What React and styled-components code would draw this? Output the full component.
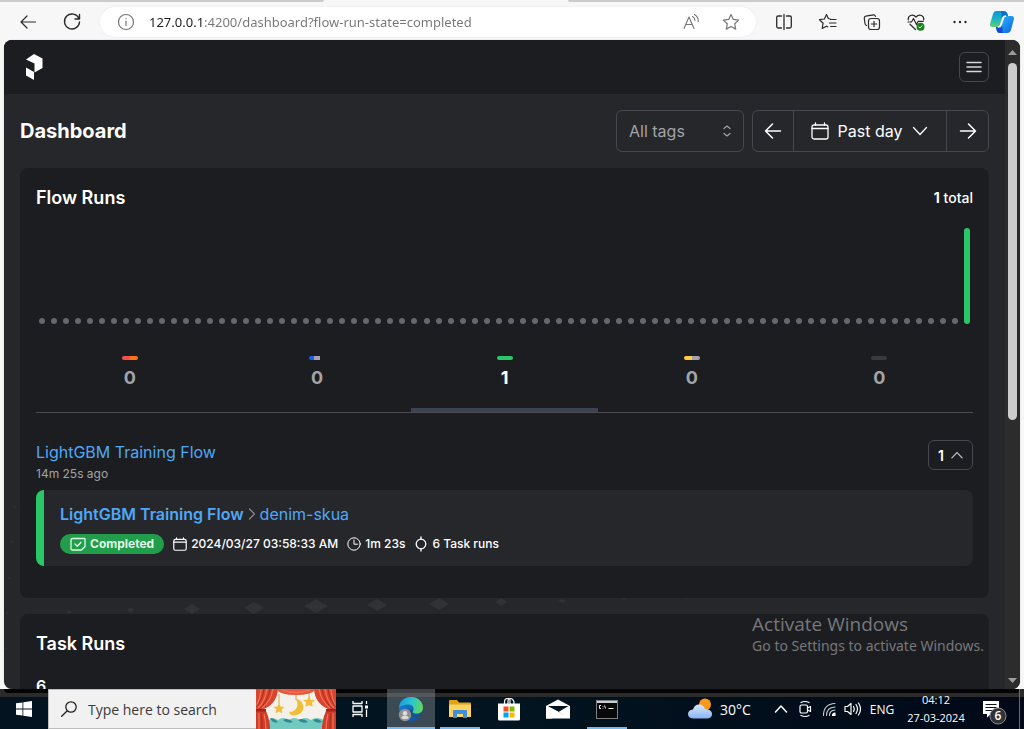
import React from "react";
import styled, { createGlobalStyle, css } from "styled-components";

const GlobalStyle = createGlobalStyle`
  *, *::before, *::after { box-sizing: border-box; }
  html, body, #root { height: 100%; }
  body { margin: 0; overflow: hidden; background: #f7f7f7; }
  button, input, select { font: inherit; color: inherit; margin: 0; }
  button { background: none; border: 0; padding: 0; cursor: pointer; }
  a { text-decoration: none; color: #4fa8f6; }
  h1, h2, p { margin: 0; }
  svg { display: block; flex: none; }
`;

const systemFont = css`font-family: "Open Sans", "Noto Sans", sans-serif;`;

const Screen = styled.div`
  height: 100vh;
  min-height: 400px;
  display: flex;
  flex-direction: column;
  overflow: hidden;
  position: relative;
  background: #f7f7f7;
`;

/* ---------- browser chrome ---------- */

const TabStrip = styled.div`
  flex: none;
  display: flex;
  gap: 244px;
  height: 3px;
`;
const TabEdge = styled.div`
  width: 324px;
  flex: ${(p) => (p.$grow ? 1 : "none")};
  height: 2px;
  background: #cbcbcb;
  border-radius: ${(p) => (p.$grow ? "0 0 0 2px" : "0 0 2px 0")};
`;
const Toolbar = styled.div`
  ${systemFont}
  flex: none;
  display: flex;
  align-items: center;
  height: 37px;
  padding: 0 2px 0 6px;
  color: #2b2b2b;
`;
const ToolButton = styled.button`
  width: ${(p) => (p.$narrow ? "40px" : "44px")};
  height: 32px;
  display: grid;
  place-items: center;
`;
const AddressBar = styled.form`
  flex: 1;
  min-width: 0;
  height: 30px;
  margin: 0 6px;
  display: flex;
  align-items: center;
  border-radius: 15px;
  background: #fff;
  box-shadow: 0 0 2px #e2e2e2;
  padding: 0 5px 0 17px;
  color: #767676;
`;
const Address = styled.input`
  flex: 1;
  min-width: 0;
  height: 24px;
  margin-left: 14px;
  padding: 0;
  border: 0;
  outline: 0;
  font-family: "Noto Sans", "Open Sans", sans-serif;
  font-size: 13px;
  color: #1d1d1d;
  background: linear-gradient(to right, #1d1d1d 54px, #757575 54px);
  -webkit-background-clip: text;
  background-clip: text;
  -webkit-text-fill-color: transparent;
`;
const AddressAction = styled.button`
  width: 40px;
  height: 28px;
  display: grid;
  place-items: center;
`;

/* ---------- page ---------- */

const Viewport = styled.div`
  flex: 1;
  min-height: 0;
  margin: 0 4px;
  display: flex;
  overflow: hidden;
  border-radius: 8px;
  background: #26272b;
  box-shadow: 0 0 1px #8a8a8a;
  font-family: Inter, sans-serif;
  color: #fff;
`;
const Page = styled.div`
  flex: 1;
  min-width: 0;
  overflow: hidden;
  position: relative;
`;
const NavBar = styled.header`
  height: 54px;
  padding: 0 16px 0 22px;
  display: flex;
  align-items: center;
  justify-content: space-between;
  background: #1c1d20;
`;
const MenuButton = styled.button`
  width: 30px;
  height: 30px;
  display: grid;
  place-items: center;
  border: 1px solid #46474f;
  border-radius: 6px;
  color: #d8d8dc;
`;
const Backdrop = styled.svg`
  position: absolute;
  left: 0;
  top: 0;
`;
const Main = styled.main`
  position: relative;
  display: flex;
  flex-direction: column;
  gap: 16px;
  padding: 16px;
`;
const PageHead = styled.div`
  display: flex;
  align-items: center;
  justify-content: space-between;
`;
const PageTitle = styled.h1`
  font-size: 20px;
  line-height: 28px;
  font-weight: 700;
`;
const Filters = styled.div`
  display: flex;
  gap: 8px;
  font-size: 16px;
`;
const SelectBox = styled.label`
  width: 128px;
  height: 42px;
  display: flex;
  align-items: center;
  padding: 0 10px 0 12px;
  border: 1px solid #46474f;
  border-radius: 6px;
  color: #a2a2a6;
`;
const TagSelect = styled.select`
  flex: 1;
  min-width: 0;
  appearance: none;
  border: 0;
  padding: 0;
  outline: 0;
  background: transparent;
`;
const ButtonGroup = styled.div`
  height: 42px;
  display: flex;
  border: 1px solid #46474f;
  border-radius: 6px;
`;
const GroupButton = styled.button`
  width: ${(p) => (p.$wide ? "154px" : "41px")};
  display: flex;
  align-items: center;
  justify-content: center;
  gap: 9px;
  border-right: ${(p) => (p.$wide ? "1px solid #46474f" : "0")};
  border-left: ${(p) => (p.$wide ? "1px solid #46474f" : "0")};
  &:first-child { width: 40px; }
`;

const Card = styled.section`
  padding: 16px 16px 32px;
  border-radius: 8px;
  background: #1c1d20;
`;
const CardHead = styled.div`
  display: flex;
  align-items: center;
  justify-content: space-between;
`;
const CardTitle = styled.h2`
  font-size: 18px;
  line-height: 28px;
  font-weight: 600;
`;
const Total = styled.p`
  font-size: 14px;
  line-height: 20px;
  font-weight: 500;
`;
const TotalCount = styled.span`
  font-weight: 700;
`;
const Chart = styled.div`
  display: flex;
  align-items: flex-end;
  height: 96px;
  margin-top: 16px;
`;
const Slot = styled.div`
  flex: 1;
  display: flex;
  justify-content: center;
  align-items: flex-end;
  height: 100%;
`;
const Bar = styled.div`
  width: 6px;
  height: ${(p) => (p.$filled ? "100%" : "6px")};
  border-radius: 3px;
  background: ${(p) => (p.$filled ? "#2ac769" : "#65666e")};
`;
const StateTabs = styled.div`
  display: flex;
  margin-top: 16px;
  border-bottom: 1px solid #4b4c52;
`;
const StateTab = styled.button`
  flex: 1;
  height: 72px;
  padding-top: 16px;
  display: flex;
  flex-direction: column;
  align-items: center;
  gap: 6px;
  font-size: 18px;
  line-height: 24px;
  font-weight: 700;
  color: ${(p) => (p.$active ? "#fff" : "#a4a4a8")};
  border-bottom: 4px solid ${(p) => (p.$active ? "#3b4252" : "transparent")};
`;
const Pill = styled.span`
  width: 16px;
  height: 4px;
  border-radius: 2px;
  background: ${(p) => p.$fill};
`;
const FlowHead = styled.div`
  margin-top: 27px;
  display: flex;
  align-items: flex-start;
  justify-content: space-between;
`;
const FlowLink = styled.a`
  display: block;
  font-size: 16px;
  line-height: 24px;
`;
const Age = styled.p`
  font-size: 12px;
  line-height: 20px;
  color: #a2a2a6;
`;
const CountButton = styled.button`
  width: 45px;
  height: 30px;
  display: flex;
  align-items: center;
  justify-content: center;
  gap: 7px;
  border: 1px solid #46474f;
  border-radius: 6px;
  font-size: 14px;
  font-weight: 600;
`;
const RunItem = styled.article`
  margin-top: 6px;
  padding: 12px 16px;
  border-left: 8px solid #2ac769;
  border-radius: 8px;
  background: #26272b;
`;
const Crumbs = styled.div`
  display: flex;
  align-items: center;
  gap: 4px;
  font-size: 16px;
  line-height: 24px;
`;
const FlowName = styled.a`
  font-weight: 600;
`;
const Details = styled.div`
  display: flex;
  align-items: center;
  gap: 9px;
  margin-top: 8px;
  font-size: 12px;
  line-height: 20px;
  font-weight: 500;
`;
const Badge = styled.span`
  display: flex;
  align-items: center;
  gap: 4px;
  padding: 0 10px;
  border-radius: 10px;
  background: #219d4b;
  color: #dffbe8;
  font-weight: 700;
`;
const Detail = styled.span`
  display: flex;
  align-items: center;
  gap: 4px;
`;
const TaskCount = styled.p`
  margin-top: 16px;
  font-size: 16px;
  line-height: 24px;
  font-weight: 600;
`;

const Scrollbar = styled.div`
  flex: none;
  width: 15px;
  display: flex;
  flex-direction: column;
  align-items: center;
  padding: 10px 0 6px;
  background: #2c2c2c;
`;
const Thumb = styled.div`
  width: 9px;
  height: 357px;
  margin: 8px 0 auto;
  border-radius: 5px;
  background: #cdcdcd;
`;

const Watermark = styled.aside`
  ${systemFont}
  position: absolute;
  right: 40px;
  bottom: 73px;
  color: #77787b;
  pointer-events: none;
`;
const WatermarkTitle = styled.p`
  font-size: 19px;
  line-height: 24px;
`;
const WatermarkText = styled.p`
  font-family: "Noto Sans", "Open Sans", sans-serif;
  font-size: 14px;
  line-height: 20px;
`;

/* ---------- taskbar ---------- */

const Taskbar = styled.footer`
  ${systemFont}
  position: relative;
  flex: none;
  height: 40px;
  display: flex;
  color: #fff;
  background: linear-gradient(to bottom, #2b2b2b 8px, transparent 8px),
    linear-gradient(to right, #03131f, #01141f 50%, #020817);
`;
const WindowShadow = styled.div`
  position: absolute;
  inset: 0 4px auto;
  height: 4px;
  border-radius: 0 0 6px 6px;
  background: #040404;
`;
const StartButton = styled.button`
  position: relative;
  width: 48px;
  display: grid;
  place-items: center;
`;
const SearchBox = styled.label`
  position: relative;
  width: 208px;
  display: flex;
  align-items: center;
  gap: 11px;
  padding-left: 12px;
  background: #f1f1f1;
  border: 1px solid #bdbdbd;
  border-width: 1px 0 1px 1px;
  color: #222;
`;
const SearchInput = styled.input`
  flex: 1;
  min-width: 0;
  border: 0;
  padding: 0;
  outline: 0;
  background: transparent;
  font-size: 14px;
  &::placeholder { color: #3a3a3a; opacity: 1; }
`;
const Curtain = styled.svg`
  position: relative;
`;
const AppButton = styled.button`
  position: relative;
  width: 48px;
  margin-left: ${(p) => (p.$first ? "3px" : "1px")};
  display: grid;
  place-items: center;
  background: ${(p) => (p.$active ? "rgba(140, 150, 155, 0.42)" : "none")};
  &::after {
    content: "";
    position: absolute;
    bottom: 0;
    left: ${(p) => (p.$active ? "0" : "4px")};
    right: ${(p) => (p.$active ? "0" : "4px")};
    height: 2px;
    background: ${(p) => (p.$open ? "#76b9ed" : "transparent")};
  }
`;
const TaskView = styled(StartButton)``;
const Tray = styled.div`
  position: relative;
  display: flex;
  align-items: stretch;
  margin-left: auto;
`;
const Weather = styled.button`
  width: 81px;
  display: flex;
  align-items: center;
  gap: 8px;
  font-size: 14px;
`;
const TrayButton = styled.button`
  width: ${(p) => p.$width || 24}px;
  display: grid;
  place-items: center;
  font-size: 12px;
`;
const Clock = styled.button`
  width: 74px;
  display: flex;
  flex-direction: column;
  align-items: center;
  justify-content: center;
  font-size: 11px;
  line-height: 18px;
  white-space: nowrap;
`;
const ShowDesktop = styled.button`
  width: 5px;
  margin-left: 6px;
  border-left: 1px solid #67676c;
`;

/* ---------- icons ---------- */

const Icon = ({ w = 20, h = w, box, sw = 1.2, children, ...rest }) => (
  <svg width={w} height={h} viewBox={box || `0 0 ${w} ${h}`} fill="none" stroke="currentColor"
    strokeWidth={sw} strokeLinecap="round" strokeLinejoin="round" aria-hidden="true" {...rest}>
    {children}
  </svg>
);

const BackIcon = () => <Icon><path d="M17.500 10H3M9 4 3 10l6 6" /></Icon>;
const ReloadIcon = () => (
  <Icon sw={1.4}><path d="M16.900 6.500A7.500 7.500 0 1 0 17.500 10M17.500 2.500v4.500H13" /></Icon>
);
const InfoIcon = () => (
  <Icon w={18} sw={1.2}><circle cx="9" cy="9" r="7.500" /><path d="M9 8v4.500M9 5.500v.2" /></Icon>
);
const ReadIcon = () => (
  <Icon w={20} sw={1.1}>
    <path d="M3 16.500 8 5l5 11.500M4.800 12.500h6.400M11.500 4.500q2.500 1.500 2.500 4M13.500 2.500q4 2.500 3.800 7" />
  </Icon>
);
const StarIcon = () => (
  <Icon w={20} sw={1.2}>
    <path d="m10 2.500 2.300 4.900 5.300.7-3.900 3.700 1 5.300-4.700-2.600-4.700 2.600 1-5.300-3.900-3.700 5.300-.7z" />
  </Icon>
);
const SplitIcon = () => (
  <Icon w={20} sw={1.3}>
    <path d="M7.500 4H4.200Q2.700 4 2.700 5.500v9Q2.700 16 4.200 16h3.300M12.500 4h3.300q1.500 0 1.500 1.500v9q0 1.500-1.500 1.500h-3.300M10 2.500v15" />
  </Icon>
);
const FavoritesIcon = () => (
  <Icon w={20} sw={1.2}>
    <path d="M12 6.800 10.300 6.500 8.500 2.500 6.400 7l-4.900.7 3.600 3.500-.9 5.300 4.300-2.300 1.200.6M12.500 7.500H18M11.500 11H18M12.500 14.500H18" />
  </Icon>
);
const CollectionsIcon = () => (
  <Icon w={20} sw={1.2}>
    <rect x="6.500" y="6.500" width="11" height="11" rx="2.500" />
    <path d="M12 9.300v5.400M9.300 12h5.400M4.500 13.500Q3.200 13 3 11.500L2.300 6.300Q2.100 4.500 3.800 4.200l7.500-1.400Q13 2.600 13.500 4.300" />
  </Icon>
);
const HealthIcon = () => (
  <Icon w={20} sw={1.2}>
    <path d="M2.300 8C1.500 4 6.500 1.200 10 5c3.500-3.800 8.500-1 7.700 3M2 10h3.500l2-3.500 3 6 1.700-3.200h5M4 12.200l5.500 5.300" />
    <circle cx="14.500" cy="14.800" r="4" fill="#178217" stroke="none" />
    <path d="m12.800 14.900 1.200 1.200 2.200-2.400" stroke="#fff" strokeWidth="1" />
  </Icon>
);
const MoreIcon = () => (
  <Icon w={20} stroke="none">
    <g fill="#2b2b2b"><circle cx="4.500" cy="10" r="1.200" /><circle cx="10" cy="10" r="1.200" /><circle cx="15.500" cy="10" r="1.200" /></g>
  </Icon>
);
const CopilotIcon = () => (
  <svg width="26" height="26" viewBox="0 0 26 26" aria-hidden="true">
    <defs>
      <linearGradient id="cpA" x1="0" y1="0" x2="0" y2="1">
        <stop offset="0" stopColor="#0b93d8" /><stop offset=".5" stopColor="#1fb3c4" /><stop offset="1" stopColor="#5fd06a" />
      </linearGradient>
      <linearGradient id="cpB" x1="0" y1="0" x2="1" y2="1">
        <stop offset="0" stopColor="#2cc0f5" /><stop offset="1" stopColor="#0f62e6" />
      </linearGradient>
    </defs>
    <path d="M7 2h8q2.500 0 3.300 2.500L19 7h-2.500q-2 0-2.700 2l-2.200 7q-.7 2-2.800 2H3.500Q.3 18 1.200 14.500L4 5q.9-3 3-3z" fill="url(#cpA)" />
    <path d="M12 2h3q2.500 0 3.300 2.500L19 7h-2.500q-2 0-2.700 2L13 10z" fill="#0c6fd0" />
    <path d="M19 24h-8q-2.500 0-3.300-2.500L7 18h2.500q2 0 2.700-2l2.200-7q.7-2 2.800-2h5.300q3.200 0 2.300 3.500L22 21q-.9 3-3 3z" fill="url(#cpB)" />
    <path d="M7 18h2q2 0 2.700-2l.8-2.500L14 24h-3q-2.500 0-3.300-2.500z" fill="#1447d4" />
    <path d="M13.800 9q.7-2 2.700-2h.7q-2.100 0-2.800 2l-2.200 7q-.7 2-2.700 2h-.7q2.100 0 2.800-2z" fill="#f7f7f7" stroke="#f7f7f7" strokeWidth="1.500" />
  </svg>
);

const PrefectLogo = () => (
  <svg width="22" height="28" viewBox="0 0 22 28" fill="#fff" role="img" aria-label="Prefect">
    <path d="M0 6.500 8 1l8.500 4.500v9.500L8.500 19.500V10.500z" />
    <path d="M0 14.500l8 4.500v8l-8-4.500z" />
  </svg>
);
const MenuIcon = () => <Icon w={16} sw={1.5}><path d="M1 3.500h14M1 8h14M1 12.500h14" /></Icon>;
const UpDownIcon = () => <Icon w={12} h={14} sw={1.2}><path d="M3 4.500 6 2l3 2.500M3 9.500 6 12l3-2.500" /></Icon>;
const ArrowIcon = ({ right }) => (
  <Icon w={18} sw={1.500}>
    {right ? <path d="M1.500 9h15M9.500 2l7 7-7 7" /> : <path d="M16.500 9h-15M8.500 2l-7 7 7 7" />}
  </Icon>
);
const CalendarIcon = ({ size }) => (
  <Icon w={size} h={size} box="0 0 18 18" sw={size > 16 ? 1.300 : 1.500}>
    <rect x="1" y="3" width="16" height="14" rx="2" /><path d="M1 6.500h16M4.500 1v2M13.500 1v2" />
  </Icon>
);
const DownIcon = () => <Icon w={18} sw={1.300}><path d="m2.500 5.500 6.500 7 6.500-7" /></Icon>;
const UpIcon = () => <Icon w={12} sw={1.100} color="#b5b5ba"><path d="m.8 9 5.200-5.500L11.200 9" /></Icon>;
const CrumbIcon = () => <Icon w={8} h={14} sw={1.200} color="#85868c"><path d="m1.500 2 5 5-5 5" /></Icon>;
const CompletedIcon = () => (
  <Icon w={16} h={14} sw={1.300}>
    <path d="M2.500 1.500h12Q15 1.500 15 2v7.500L11.500 13h-9Q1 13 1 11.500V3q0-1.500 1.500-1.500zM5 7l2.300 2.300L11 5.300" />
  </Icon>
);
const ClockIcon = () => <Icon w={14} sw={1}><circle cx="7" cy="7" r="6.200" /><path d="M7 3v4.200h3.500" /></Icon>;
const TaskIcon = () => (
  <Icon w={14} h={16} sw={1.300}><circle cx="7" cy="8" r="4.800" /><path d="M7 1v2.200M7 12.800V15" /></Icon>
);

const WindowsIcon = () => (
  <svg width="16" height="16" viewBox="0 0 16 16" fill="#fff" aria-hidden="true">
    <path d="M0 2.300 6.500 1.400v6.200H0zM7.300 1.300 16 0v7.600H7.300zM0 8.400h6.500v6.200L0 13.700zM7.300 8.400H16V16l-8.700-1.300z" />
  </svg>
);
const SearchIcon = () => <Icon w={16} sw={1.300}><circle cx="10" cy="6" r="5.200" /><path d="M6.300 9.700.7 15.300" /></Icon>;
const CurtainPicture = () => (
  <Curtain width="80" height="40" viewBox="0 0 80 40" aria-hidden="true">
    <rect width="80" height="40" fill="#f3f1ea" />
    <path d="M12 32q4-5 10-1q5-4 11 0q5-4 11 0q5-4 11 0q5-4 13 0v9H12z" fill="#72c9c0" />
    <path d="M14 29q4 0 8 4q-5 2-8-4zM27 31q5-3 10 2q-6 2-10-2zM42 31q5-3 10 2q-6 2-10-2zM57 31q5-3 9 2q-6 2-9-2z" fill="#2f8b8d" />
    <path d="M23 5v10M40 5v6M53 4v6" stroke="#d3a846" strokeWidth="1" />
    <path d="M39 9.500c11 1 12 17-2 17-2 0-4-2-4-4 6 2 12-7 6-13z" fill="#f3bd3c" />
    <path d="m23 14 1.500 3.500 4 .4-3 2.500.8 4-3.300-2-3.500 2 1-4-3-2.500 4-.4zM53 7.500l1.700 3.200 4.300.4-3 2.600.6 4-3.600-1.800-3.500 1.800.7-4-3-2.600 4.300-.4z" fill="#f2bd35" />
    <path d="M0 0h22q-1 16-17 21l2 19H0zM80 0H58q1 16 17 21l-2 19h7z" fill="#d9452e" />
    <path d="M20 0h40q-4 6-20 6T20 0z" fill="#e8553b" />
    <path d="M0 22h10q4 9 4 18H0zM80 22H70q-4 9-4 18h14z" fill="#cf3c28" />
    <path d="M5 0q-1 11-5 17M11 0Q9 13 2 19M17 0q-2 12-11 19M75 0q1 11 5 17M69 0q2 13 9 19M63 0q2 12 11 19M3 24v16M8 25q2 7 2 15M77 24v16M72 25q-2 7-2 15M26 1q14 5 28 0" stroke="#ee7457" strokeWidth="1.200" fill="none" />
    <path d="M8 0Q6 12 0 18M14 0q-2 13-11 20M72 0q2 12 8 18M66 0q2 13 11 20M5 24q1 8 1 16M75 24q-1 8-1 16" stroke="#b32a1c" strokeWidth="1" fill="none" />
    <path d="M0 20h10v2.500H0zM70 20h10v2.500H70z" fill="#a61f1a" />
  </Curtain>
);
const TaskViewIcon = () => (
  <Icon w={18} sw={1.300} strokeLinecap="butt">
    <path d="M2 1v2.500h9V1M2 17v-2.500h9V17M2 6h9v6H2zM15.500 1v3M15.500 9.500V17" />
    <path d="M14 5.500h3v3h-3z" fill="#fff" stroke="none" />
  </Icon>
);
const EdgeIcon = () => (
  <svg width="26" height="26" viewBox="0 0 26 26" aria-hidden="true">
    <defs>
      <linearGradient id="edA" x1="0" y1=".3" x2="1" y2=".5">
        <stop offset="0" stopColor="#1b9de2" /><stop offset=".5" stopColor="#2bc3d2" /><stop offset="1" stopColor="#62d957" />
      </linearGradient>
      <linearGradient id="edB" x1="0" y1="0" x2="1" y2="1">
        <stop offset="0" stopColor="#1687d9" /><stop offset="1" stopColor="#0c4a9e" />
      </linearGradient>
    </defs>
    <path d="M1 12C1 5 6 1 13 1s12 5 12 10.500q0 4-3 5.500l1 3q-4 5-10 5Q1 24 1 12z" fill="url(#edB)" />
    <path d="M1 12C2 4.500 7 1 13 1c7 0 12 5 12 10.500 0 4-3 6-6.500 6-3 0-4.500-1-3.500-2.500 2-3-.5-6.500-4.500-6.500C6 8.500 2 10 1 12z" fill="url(#edA)" />
    <path d="M14.800 13.500q-1.800 4 1.200 5.500 4 2 8-1.500l-.5 2q-5 2.500-9 .5-3.500-2-2-5.500z" fill="#31495a" />
    <circle cx="7" cy="19" r="6.200" fill="#8f9090" />
    <circle cx="7" cy="17.300" r="2.300" fill="#deddd9" />
    <path d="M3.200 22q.6-2.500 3.800-2.500t3.800 2.500q-3.800 2.500-7.600 0z" fill="#deddd9" />
  </svg>
);
const FolderIcon = () => (
  <svg width="22" height="20" viewBox="0 0 22 20" aria-hidden="true">
    <path d="M0 2q0-1 1-1h7l2 2.500h11q1 0 1 1V18H0z" fill="#e3a21a" />
    <path d="M0 5.500h22V17q0 1-1 1H1q-1 0-1-1z" fill="#fcd462" />
    <path d="M4 19v-7q0-1 1-1h12q1 0 1 1v7h-4v-4H8v4z" fill="#3f8fd9" />
  </svg>
);
const StoreIcon = () => (
  <svg width="24" height="24" viewBox="0 0 24 24" aria-hidden="true">
    <path d="M7.500 7V5Q7.500 1.500 10.500 1.500T13 4v3M11 7V4q0-2.500 2.500-2.500T17 5v2" stroke="#fff" strokeWidth="1.200" fill="none" />
    <path d="M1 6.500h22V22q0 1.500-1.500 1.500h-19Q1 23.500 1 22z" fill="#fff" />
    <path fill="#f25022" d="M6.500 9.500h5v5h-5z" /><path fill="#7fba00" d="M12.500 9.500h5v5h-5z" />
    <path fill="#00a4ef" d="M6.500 15.500h5v5h-5z" /><path fill="#ffb900" d="M12.500 15.500h5v5h-5z" />
  </svg>
);
const MailIcon = () => (
  <svg width="24" height="20" viewBox="0 0 24 20" aria-hidden="true">
    <path d="M0 7 12 .500 24 7v12.500H0z" fill="#fff" />
    <path d="M1.500 7h21L12.500 13l6 3z" fill="#04141f" />
    <path d="M1.500 7 12.500 13 6 19.500H0V7z" fill="#fff" />
  </svg>
);
const TerminalIcon = () => (
  <svg width="22" height="19" viewBox="0 0 22 19" aria-hidden="true">
    <rect x=".5" y=".5" width="21" height="18" fill="#080808" stroke="#7d8184" />
    <path d="M1 1h20v2H1z" fill="#c8ccd0" />
    <path d="M5 5.500H3.500v3H5M7 6v.6M7 8v.6M8.500 5.500l1 3M12.500 8.500h5" stroke="#eee" fill="none" />
  </svg>
);
const WeatherIcon = () => (
  <svg width="24" height="22" viewBox="0 0 24 22" aria-hidden="true">
    <defs>
      <linearGradient id="cloud" x1="0" y1="0" x2="0" y2="1"><stop offset="0" stopColor="#dbe8fd" /><stop offset="1" stopColor="#86b5f4" /></linearGradient>
    </defs>
    <circle cx="17" cy="6.500" r="6" fill="#f79a1c" />
    <path d="M5 20.500Q0 20 0 16t5-4.500Q6.500 6.500 11 6.500t6 4.500q7 .5 7 5 0 4-4.500 4.500z" fill="url(#cloud)" />
  </svg>
);
const ChevronUpIcon = () => <Icon w={14} sw={1.500}><path d="m1.500 10 5.500-6 5.500 6" /></Icon>;
const MeetIcon = () => (
  <Icon w={14} h={18} sw={1.200}><rect x="2" y="5" width="7.500" height="8" rx="1.500" /><path d="m9.500 8 3-1.500v5L9.500 10M3 2.500q4-2 8 0M3 15.500q4 2 8 0" /></Icon>
);
const WifiIcon = () => (
  <Icon w={14} sw={1.100}>
    <path d="M1.500 13.500Q1.500 2 13 1.500M4.500 13.500q0-8 8.500-8.500M7.500 13.500q0-5 5.500-5.500" opacity=".8" />
    <path d="M10.500 13.500q0-2.300 2.500-2.500v2.500z" fill="#fff" />
  </Icon>
);
const SoundIcon = () => (
  <Icon w={18} h={16} sw={1.200}><path d="M1 5.500h2.500L7 2.500v11l-3.500-3H1zM9.500 5.500q1.500 2.500 0 5M12 3.500q3 4.500 0 9M14.500 2q4 6 0 12" /></Icon>
);
const NoticeIcon = () => (
  <svg width="28" height="32" viewBox="0 0 28 32" aria-hidden="true">
    <path d="M4 8h16v13h-8l-4 3.500V21H4z" fill="#fff" />
    <path d="M6.500 11.500h11M6.500 14.500h11M6.500 17.500h7" stroke="#10141c" strokeWidth="1.200" />
    <circle cx="19" cy="23" r="8" fill="#303238" stroke="#85878c" />
    <text x="19" y="27" textAnchor="middle" fill="#fff" fontSize="12" fontFamily="Open Sans, sans-serif" fontWeight="600">6</text>
  </svg>
);

/* x, y, half width, half height of each backdrop diamond */
const DIAMONDS = [
  [65, 572, 3, 2], [127, 570, 4, 3], [188, 569, 8, 5], [250, 568, 10, 6], [312, 566, 12, 7],
  [373, 565, 10, 6], [435, 564, 10, 6], [497, 562, 6, 4], [558, 561, 4, 2], [620, 559, 2, 1],
  [682, 558, 2, 1], [3, 573, 2, 1], [2, 609, 2, 1], [11, 467, 2, 1], [8, 502, 2, 1], [5, 538, 2, 1],
];

const SLOTS = Array.from({ length: 78 }, (_, i) => i === 77);

const STATES = [
  { name: "Failed", count: 0, fill: "linear-gradient(to right, #f5504f 50%, #f97316 50%)" },
  { name: "Running", count: 0, fill: "linear-gradient(to right, #1860f2 5px, #a8a0ae 5px, #a8a0ae 11px, transparent 11px)" },
  { name: "Completed", count: 1, fill: "#2ac769", active: true },
  { name: "Scheduled", count: 0, fill: "linear-gradient(to right, #fbcd45 50%, #a8a0ae 50%)" },
  { name: "Cancelled", count: 0, fill: "#3a3a3c" },
];

const DashboardPage = () => (
  <Page>
    <Backdrop width="100%" height="100%" aria-hidden="true">
      {DIAMONDS.map(([x, y, w, h]) => (
        <path key={`${x}-${y}`} d={`M${x - w} ${y}L${x} ${y - h}L${x + w} ${y}L${x} ${y + h}z`} fill="#313236" />
      ))}
    </Backdrop>
    <NavBar>
      <PrefectLogo />
      <MenuButton aria-label="Menu"><MenuIcon /></MenuButton>
    </NavBar>
    <Main>
      <PageHead>
        <PageTitle>Dashboard</PageTitle>
        <Filters>
          <SelectBox>
            <TagSelect aria-label="Tags"><option>All tags</option></TagSelect>
            <UpDownIcon />
          </SelectBox>
          <ButtonGroup>
            <GroupButton aria-label="Previous period"><ArrowIcon /></GroupButton>
            <GroupButton $wide><CalendarIcon size={18} />Past day<DownIcon /></GroupButton>
            <GroupButton aria-label="Next period"><ArrowIcon right /></GroupButton>
          </ButtonGroup>
        </Filters>
      </PageHead>

      <Card>
        <CardHead>
          <CardTitle>Flow Runs</CardTitle>
          <Total><TotalCount>1</TotalCount> total</Total>
        </CardHead>
        <Chart>
          {SLOTS.map((filled, i) => <Slot key={i}><Bar $filled={filled} /></Slot>)}
        </Chart>
        <StateTabs role="tablist">
          {STATES.map((s) => (
            <StateTab key={s.name} role="tab" aria-label={s.name} aria-selected={!!s.active} $active={s.active}>
              <Pill $fill={s.fill} />
              {s.count}
            </StateTab>
          ))}
        </StateTabs>
        <FlowHead>
          <div>
            <FlowLink href="#flow">LightGBM Training Flow</FlowLink>
            <Age>14m 25s ago</Age>
          </div>
          <CountButton>1<UpIcon /></CountButton>
        </FlowHead>
        <RunItem>
          <Crumbs>
            <FlowName href="#flow">LightGBM Training Flow</FlowName>
            <CrumbIcon />
            <a href="#run">denim-skua</a>
          </Crumbs>
          <Details>
            <Badge><CompletedIcon />Completed</Badge>
            <Detail><CalendarIcon size={14} />2024/03/27 03:58:33 AM</Detail>
            <Detail><ClockIcon />1m 23s</Detail>
            <Detail><TaskIcon />6 Task runs</Detail>
          </Details>
        </RunItem>
      </Card>

      <Card>
        <CardTitle>Task Runs</CardTitle>
        <TaskCount>6</TaskCount>
      </Card>
    </Main>
  </Page>
);

export default function App() {
  return (
    <Screen>
      <GlobalStyle />
      <TabStrip><TabEdge /><TabEdge $grow /></TabStrip>
      <Toolbar>
        <ToolButton aria-label="Back"><BackIcon /></ToolButton>
        <ToolButton aria-label="Reload"><ReloadIcon /></ToolButton>
        <AddressBar>
          <InfoIcon />
          <Address aria-label="Address" defaultValue="127.0.0.1:4200/dashboard?flow-run-state=completed" />
          <AddressAction type="button" aria-label="Read aloud"><ReadIcon /></AddressAction>
          <AddressAction type="button" aria-label="Add to favorites"><StarIcon /></AddressAction>
        </AddressBar>
        <ToolButton aria-label="Split screen"><SplitIcon /></ToolButton>
        <ToolButton aria-label="Favorites"><FavoritesIcon /></ToolButton>
        <ToolButton aria-label="Collections"><CollectionsIcon /></ToolButton>
        <ToolButton aria-label="Browser essentials"><HealthIcon /></ToolButton>
        <ToolButton aria-label="More"><MoreIcon /></ToolButton>
        <ToolButton $narrow aria-label="Copilot"><CopilotIcon /></ToolButton>
      </Toolbar>
      <Viewport>
        <DashboardPage />
        <Scrollbar>
          <svg width="9" height="5" viewBox="0 0 9 5" aria-hidden="true"><path d="M0 5 4.500 0 9 5z" fill="#9d9d9d" /></svg>
          <Thumb />
          <svg width="9" height="5" viewBox="0 0 9 5" aria-hidden="true"><path d="M0 0 4.500 5 9 0z" fill="#9d9d9d" /></svg>
        </Scrollbar>
      </Viewport>
      <Watermark>
        <WatermarkTitle>Activate Windows</WatermarkTitle>
        <WatermarkText>Go to Settings to activate Windows.</WatermarkText>
      </Watermark>
      <Taskbar>
        <WindowShadow />
        <StartButton aria-label="Start"><WindowsIcon /></StartButton>
        <SearchBox>
          <SearchIcon />
          <SearchInput aria-label="Search" placeholder="Type here to search" />
        </SearchBox>
        <CurtainPicture />
        <TaskView aria-label="Task view"><TaskViewIcon /></TaskView>
        <AppButton $first $active $open aria-label="Edge"><EdgeIcon /></AppButton>
        <AppButton $open aria-label="File Explorer"><FolderIcon /></AppButton>
        <AppButton aria-label="Store"><StoreIcon /></AppButton>
        <AppButton aria-label="Mail"><MailIcon /></AppButton>
        <AppButton $open aria-label="Terminal"><TerminalIcon /></AppButton>
        <Tray>
          <Weather><WeatherIcon />30°C</Weather>
          <TrayButton aria-label="Show hidden icons"><ChevronUpIcon /></TrayButton>
          <TrayButton aria-label="Meet now"><MeetIcon /></TrayButton>
          <TrayButton aria-label="Network"><WifiIcon /></TrayButton>
          <TrayButton aria-label="Volume"><SoundIcon /></TrayButton>
          <TrayButton $width={34}>ENG</TrayButton>
          <Clock><span>04:12</span><span>27-03-2024</span></Clock>
          <TrayButton $width={40} aria-label="Notifications"><NoticeIcon /></TrayButton>
          <ShowDesktop aria-label="Show desktop" />
        </Tray>
      </Taskbar>
    </Screen>
  );
}
